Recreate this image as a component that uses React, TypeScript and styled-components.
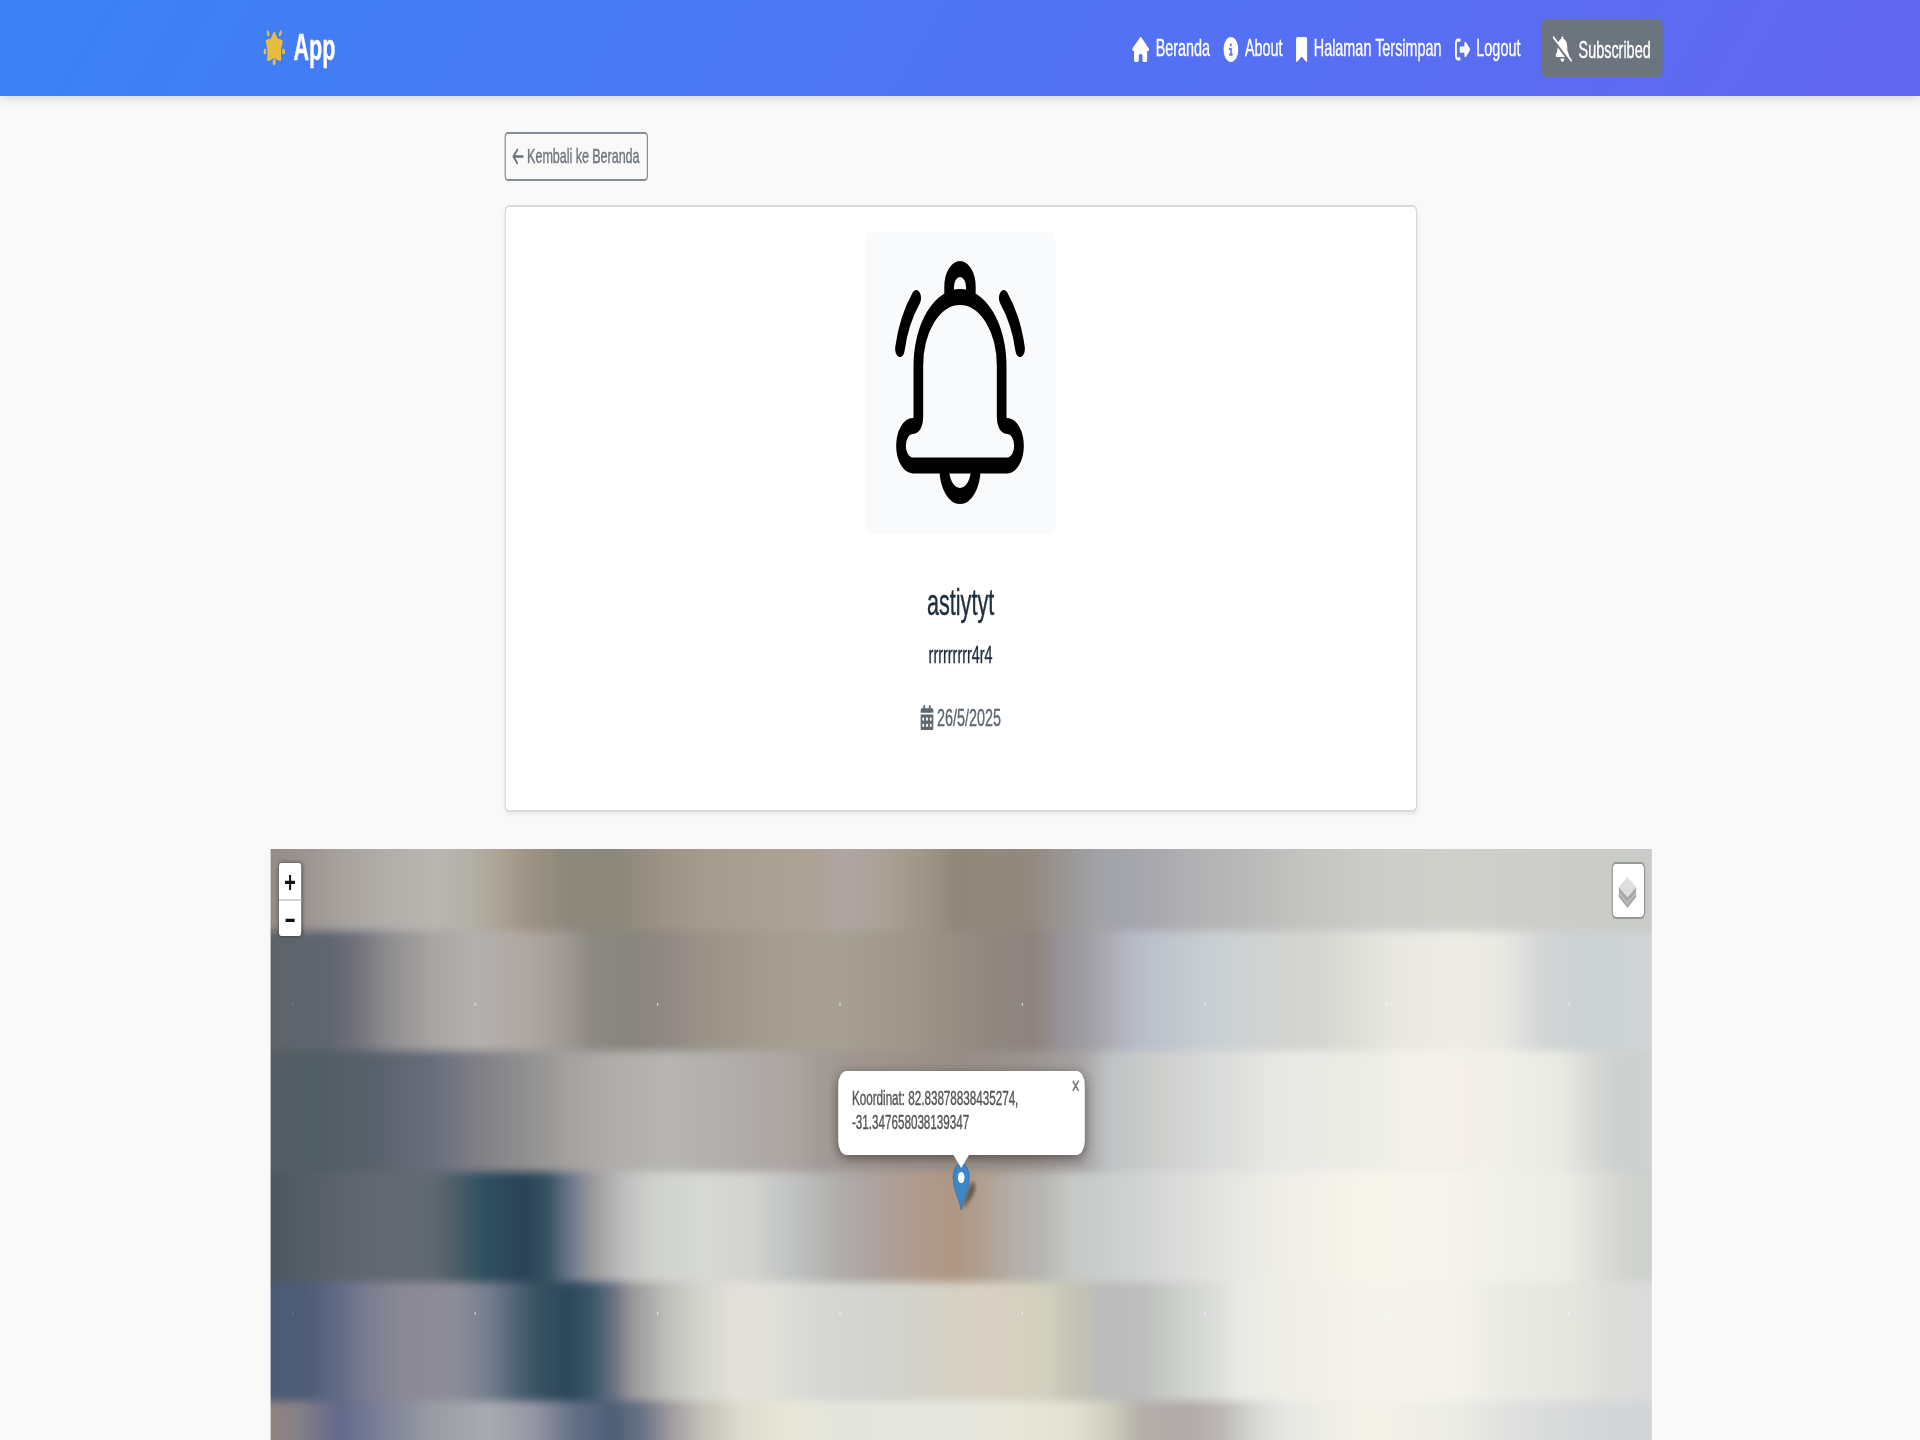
import React from "react";
import styled, { createGlobalStyle } from "styled-components";
import {
  FaArrowLeft,
  FaBellSlash,
  FaBookmark,
  FaCalendarDays,
  FaCircleInfo,
  FaHouse,
  FaRightFromBracket,
} from "react-icons/fa6";

const GlobalStyle = createGlobalStyle`
  * { box-sizing: border-box; }
  html, body { margin: 0; height: 1440px; overflow: hidden; background: #f9f9f9; }
`;

const Page = styled.div`
  width: 3200px;
  height: 1440px;
  overflow: hidden;
  transform: scaleX(0.6);
  transform-origin: 0 0;
  background: #f9f9f9;
  color: #212f3d;
  font-family: "Liberation Sans", Arial, sans-serif;
  font-size: 24px;
  line-height: 36px;
  -webkit-text-stroke: 0.4px currentColor;
`;

const Header = styled.header`
  display: flex;
  align-items: center;
  justify-content: space-between;
  height: 96px;
  padding: 0 429px 0 439px;
  background: linear-gradient(135deg, #3b82f6, #6366f1);
  box-shadow: 0 3px 12px rgba(0, 0, 0, 0.13);
  color: #fff;
`;

const Brand = styled.div`
  display: flex;
  align-items: center;
  gap: 14px;
  font-size: 36px;
  font-weight: 700;
  svg { width: 36px; height: 37px; margin-top: -1px; }
`;

const Nav = styled.nav`
  display: flex;
  align-items: center;
  gap: 22px;
`;

const NavLink = styled.a<{ $icon: number }>`
  display: flex;
  align-items: center;
  gap: 11px;
  color: #fff;
  white-space: nowrap;
  svg { width: ${(p) => p.$icon}px; height: 25px; margin-top: 2px; }
`;

const SubscribeButton = styled.button`
  display: flex;
  align-items: center;
  gap: 11px;
  width: 202px;
  height: 58px;
  margin-left: 13px;
  padding: 4px 0 0 19px;
  border: 0;
  border-radius: 7px;
  background: #6c757d;
  color: #fff;
  font: inherit;
  svg { width: 32px; height: 26px; margin-top: -3px; }
`;

const Content = styled.main`
  width: 1521px;
  margin: 0 auto 0 840.5px;
  padding-top: 36px;
`;

const BackButton = styled.button`
  display: flex;
  align-items: center;
  gap: 5px;
  width: 239px;
  height: 49px;
  padding: 0 0 1px 10px;
  border: 2.5px solid #868c97;
  border-radius: 5px;
  background: transparent;
  color: #6c757d;
  font: inherit;
  font-size: 21px;
  letter-spacing: -0.1px;
  white-space: nowrap;
  svg { width: 21px; height: 21px; }
`;

const Card = styled.article`
  display: flex;
  flex-direction: column;
  align-items: center;
  height: 607px;
  margin-top: 24px;
  padding-top: 25px;
  border: 2px solid #dadada;
  border-radius: 7px;
  background: #fff;
  box-shadow: 0 3px 5px rgba(0, 0, 0, 0.06);
`;

const Photo = styled.div`
  width: 317px;
  height: 301px;
  margin-right: 2px;
  border-radius: 7px;
  background: #f9fafc;
  svg { display: block; width: 317px; height: 300px; }
`;

const Title = styled.h5`
  margin: 48px 0 0;
  font-size: 36px;
  font-weight: 400;
  line-height: 44px;
`;

const Description = styled.p`
  margin: 12px 0 0;
`;

const PostDate = styled.div`
  display: flex;
  align-items: center;
  gap: 6px;
  margin-top: 27px;
  color: #5f676f;
  svg { width: 22px; height: 25px; margin-top: -1px; }
`;

const MapFrame = styled.section`
  position: relative;
  display: flex;
  justify-content: space-between;
  align-items: flex-start;
  width: 2302px;
  height: 620px;
  margin: 37px 0 0 451px;
  padding: 13px 13px;
  overflow: hidden;
`;

const Imagery = styled.div`
  position: absolute;
  inset: 0 -12px;
  padding: 0 12px;
  margin-top: -19px;
  filter: blur(4px);
`;

const ImageryRow = styled.div<{ $height: number; $stops: string }>`
  height: ${(p) => p.$height}px;
  margin: 0 -12px;
  background: linear-gradient(90deg, ${(p) => p.$stops});
`;

const TileMark = styled.i<{ $x: number; $y: number }>`
  position: absolute;
  left: ${(p) => p.$x}px;
  top: ${(p) => p.$y}px;
  width: 2px;
  height: 3px;
  background: rgba(255, 255, 255, ${(p) => (p.$x < 100 ? 0.15 : 0.6)});
`;

const ZoomControl = styled.div`
  position: relative;
  width: 37px;
  margin: 1px 0 0 1px;
  border-radius: 4px;
  background: #fff;
  box-shadow: 0 0 6px rgba(0, 0, 0, 0.5);
`;

const ZoomButton = styled.button`
  display: flex;
  align-items: center;
  justify-content: center;
  width: 37px;
  height: 36px;
  padding: 0;
  border: 0;
  background: transparent;
  svg { width: 17px; height: 17px; }
  & + & { height: 37px; border-top: 2px solid #d0d3d3; }
`;

const LayersControl = styled.button`
  position: relative;
  display: flex;
  align-items: center;
  justify-content: center;
  width: 56px;
  height: 57px;
  margin-right: -2px;
  padding: 4px 0 0;
  border: 2.5px solid rgba(0, 0, 0, 0.25);
  border-radius: 7px;
  background: #fff;
  background-clip: padding-box;
  svg { width: 31px; height: 31px; margin-left: -3px; }
`;

const Popup = styled.div`
  position: absolute;
  left: 946px;
  top: 222px;
  width: 411px;
  height: 84px;
  padding: 15px 23px;
  border-radius: 14px;
  background: #fff;
  box-shadow: 0 3px 14px rgba(0, 0, 0, 0.45);
  color: #555;
  font-size: 19.5px;
  letter-spacing: -0.05px;
  line-height: 24px;
`;

const PopupTip = styled.div`
  position: absolute;
  left: 1137px;
  top: 305px;
  width: 28px;
  height: 14px;
  background: #fff;
  clip-path: polygon(0 0, 100% 0, 50% 100%);
`;

const CloseMark = styled.span`
  position: absolute;
  top: 3px;
  right: 8px;
  color: #757575;
  font-size: 24px;
`;

const Pin = styled.svg`
  position: absolute;
  left: 1135px;
  top: 313px;
  width: 64px;
  height: 52px;
`;

// Samples are "position:colour" pairs, given separately for the left and right half.
const sample = (left: string, right: string) => {
  const read = (text: string, origin: number) =>
    text.split(" ").map((item) => {
      const [x, colour] = item.split(":");
      const at = ((Number(x) / 2.24 + origin - 270) / 1382) * 100;
      return `#${colour} ${at.toFixed(2)}%`;
    });
  return [...read(left, 260), ...read(right, 960)].join(", ");
};

const imagery = [
  {
    height: 101,
    stops: sample(
      "25:928b85 110:9a938f 200:a8a29d 300:b2aeaa 400:b8b6b0 480:b4b0a8 550:aba293 620:9c9184 700:8c887b 800:8b877b 900:9b9184 1000:a59c8f 1150:aaa093 1250:aea297 1310:afa5a3 1400:aaa195 1500:9c9487 1560:90877b",
      "80:91897c 150:91887e 220:999490 300:a1a1a8 400:a6a6ad 500:b0afb2 620:b8b8b8 760:c2c4c0 900:cbccc7 1100:cfd0ca 1300:cccdc8 1549:c9cbc8"
    ),
  },
  {
    height: 120,
    stops: sample(
      "25:5c6369 170:5f6670 230:71717b 300:8e8d8f 400:a8a5a3 500:b3b0ad 600:b0a7a3 680:a29c98 750:8e8983 830:87857d 920:928884 1000:9a9287 1150:a59d90 1300:a69f92 1450:a0978b 1560:968d83",
      "80:8f8680 170:8e847f 230:97959a 290:a0a0a6 340:afaeb4 380:b6bac8 450:bec4cc 550:c8cfd3 680:d0d3d1 800:d6d6d1 900:e0e1da 960:e8e8e1 1100:edede6 1200:e9e9e2 1290:d4d6d7 1370:cbd2d3 1450:ccd2d3 1549:d2d4d6"
    ),
  },
  {
    height: 121,
    stops: sample(
      "25:535d63 150:515e63 270:59616c 400:686f7c 480:7d7b84 600:908f8f 700:a4a19e 800:b0adaa 920:b6b5b1 1050:b1aeab 1180:aea6a3 1260:a19b98 1340:a0958f 1560:988e88",
      "150:9a928d 270:a7a3a3 330:bdc2c5 430:cccecb 550:d8d9da 620:dfe0dc 700:e8e8e4 900:edede7 1000:f2f1ea 1110:f4efe8 1200:f0f0e8 1330:e9eae3 1400:d8dad5 1450:cdd1d0 1549:cad2d1"
    ),
  },
  {
    height: 110,
    stops: sample(
      "25:4b555f 100:515c64 200:5e646d 300:636972 400:5f6871 450:4c5d68 510:2f5060 600:2b4257 650:34505f 700:69768a 760:a09ea0 820:bcbdbd 880:ced0cc 1000:d7d9d3 1100:d3d4cf 1200:bfc2c1 1300:b0adac 1400:ada09a 1480:b09a8c 1560:ae9783",
      "50:b0a08f 100:b5aaa3 180:b7b5b3 250:c6c9c6 350:ccd0ce 450:d8d8da 530:dfe0dc 650:ebebe5 800:f3f0e8 920:f7f6ec 1050:f7f5ed 1200:f0f1e9 1350:ebece5 1430:dadbd6 1500:ced1cd 1549:cdd0cd"
    ),
  },
  {
    height: 119,
    stops: sample(
      "25:4a5a76 120:4e5c77 190:616b85 250:7a7c90 330:8a8994 450:8d8d97 520:757e8e 600:475c70 640:35505f 700:2c475b 750:3a5568 800:6a7183 840:9b9799 920:bfc0ba 1000:d6d7cf 1070:e3e0d7 1150:dfe0d9 1250:d6d8d4 1400:d2d3cd 1500:d3d2c8 1560:d6d0c3",
      "50:d9d0c4 150:d5d0bf 200:ced0bd 250:c5c2b5 320:bbbcbb 400:bcbdbc 480:cccfcc 570:dcdedb 620:eaeae5 800:f2efe8 900:f4f4ec 1100:f3f3eb 1200:ebebe5 1350:e6e6e0 1430:dddeda 1549:dadadc"
    ),
  },
  {
    height: 80,
    stops: sample(
      "25:95847c 100:858089 190:62698a 280:7b8097 400:9a9ca5 520:a9abb2 620:9597a5 720:5f6c84 800:4d5f77 860:697184 930:a29ea1 1000:c4c2b8 1080:dddccf 1200:e9e7d9 1300:e4e5dd 1560:e6e7e1",
      "100:e8e7da 250:e2e1d3 330:cfcfbf 400:b5afab 500:b0aaa8 570:bab5b2 650:d5d6d2 720:e8e8e3 900:f2f2e8 1100:ecece6 1250:dddedd 1400:d4d6d9 1549:d2d6d9"
    ),
  },
];

const marks = [154, 463].flatMap((y) =>
  Array.from({ length: 8 }, (_, i) => ({ x: 36 + i * 303.9, y }))
);

const GlowingStar = () => (
  <svg viewBox="0 0 37 37" fill="#e8bd3e">
    <path
      d="M18.500 4.500 L23 11 L31 12.500 L28 21 L28.500 30.500 L18.500 27.500 L8.500 30.500 L9 21 L6 12.500 L14 11 Z"
      stroke="#e8bd3e"
      strokeWidth="4"
      strokeLinejoin="round"
    />
    <ellipse cx="8" cy="4" rx="2" ry="3.400" transform="rotate(-30 8 4)" />
    <ellipse cx="29" cy="4" rx="2" ry="3.400" transform="rotate(30 29 4)" />
    <ellipse cx="2.500" cy="22.500" rx="2.500" ry="3" />
    <ellipse cx="34.500" cy="22.500" rx="2.500" ry="3" />
    <ellipse cx="18.500" cy="33.500" rx="2.600" ry="3.200" />
  </svg>
);

const RingingBell = () => (
  <svg
    viewBox="0 0 315 300"
    preserveAspectRatio="none"
    fill="none"
    stroke="#000"
    strokeWidth="16"
    strokeLinecap="round"
    strokeLinejoin="round"
  >
    <path d="M88 134a69 69 0 0 1 138 0V184q0 10 9 10a19.500 19.500 0 0 1 0 39.500H79a19.500 19.500 0 0 1 0-39.500q9 0 9-10Z" />
    <path d="M139 60V55a18 18 0 0 1 36 0V60" />
    <path d="M131 237a26 27 0 0 0 52 0" />
    <path d="M84.500 66Q64 88 57.500 117" />
    <path d="M229.500 66Q250 88 256.500 117" />
  </svg>
);

const LayersIcon = () => (
  <svg viewBox="0 0 31 31">
    <path d="M1 10L15.500 20L30 10V20L15.500 31L1 20Z" fill="#a9a9a9" />
    <path d="M1 15.500L15.500 26L30 15.500" fill="none" stroke="#c4c4c4" strokeWidth="1.500" />
    <path d="M15.500 0L30 10L15.500 20L1 10Z" fill="#dedede" />
  </svg>
);

export default function App() {
  return (
    <>
      <GlobalStyle />
      <Page>
        <Header>
          <Brand>
            <GlowingStar />
            <span>App</span>
          </Brand>
          <Nav>
            <NavLink $icon={28}><FaHouse preserveAspectRatio="none" /><span>Beranda</span></NavLink>
            <NavLink $icon={25}><FaCircleInfo /><span>About</span></NavLink>
            <NavLink $icon={19}><FaBookmark /><span>Halaman Tersimpan</span></NavLink>
            <NavLink $icon={25}><FaRightFromBracket /><span>Logout</span></NavLink>
            <SubscribeButton><FaBellSlash /><span>Subscribed</span></SubscribeButton>
          </Nav>
        </Header>
        <Content>
          <BackButton><FaArrowLeft /><span>Kembali ke Beranda</span></BackButton>
          <Card>
            <Photo><RingingBell /></Photo>
            <Title>astiytyt</Title>
            <Description>rrrrrrrrr4r4</Description>
            <PostDate><FaCalendarDays /><span>26/5/2025</span></PostDate>
          </Card>
        </Content>
        <MapFrame>
          <Imagery>
            {imagery.map((row, i) => (
              <ImageryRow key={i} $height={row.height} $stops={row.stops} />
            ))}
          </Imagery>
          {marks.map((m, i) => (
            <TileMark key={i} $x={m.x} $y={m.y} />
          ))}
          <ZoomControl>
            <ZoomButton>
              <svg viewBox="0 0 18 18" stroke="#111" strokeWidth="3.500"><path d="M0 10H18M9 2V18" /></svg>
            </ZoomButton>
            <ZoomButton>
              <svg viewBox="0 0 18 18" stroke="#111" strokeWidth="3.500"><path d="M1 11H17" /></svg>
            </ZoomButton>
          </ZoomControl>
          <LayersControl><LayersIcon /></LayersControl>
          <Pin viewBox="0 0 64 52">
            <defs>
              <filter id="soft" x="-50%" y="-50%" width="200%" height="200%">
                <feGaussianBlur stdDeviation="2.500" />
              </filter>
            </defs>
            <path d="M17 46C24 44 40 33 40 24Q40 19 33 21Q27 24 17 46Z" fill="#000" opacity="0.42" filter="url(#soft)" />
            <path d="M16 48C14 38 2.500 28 2.500 15A13.500 13.500 0 0 1 29.500 15C29.500 28 18 38 16 48Z" fill="#3c87c8" stroke="#2f76b3" />
            <circle cx="16" cy="15.500" r="5.500" fill="#fff" />
          </Pin>
          <Popup>
            Koordinat: 82.83878838435274,
            <br />
            -31.347658038139347
            <CloseMark>×</CloseMark>
          </Popup>
          <PopupTip />
        </MapFrame>
      </Page>
    </>
  );
}
